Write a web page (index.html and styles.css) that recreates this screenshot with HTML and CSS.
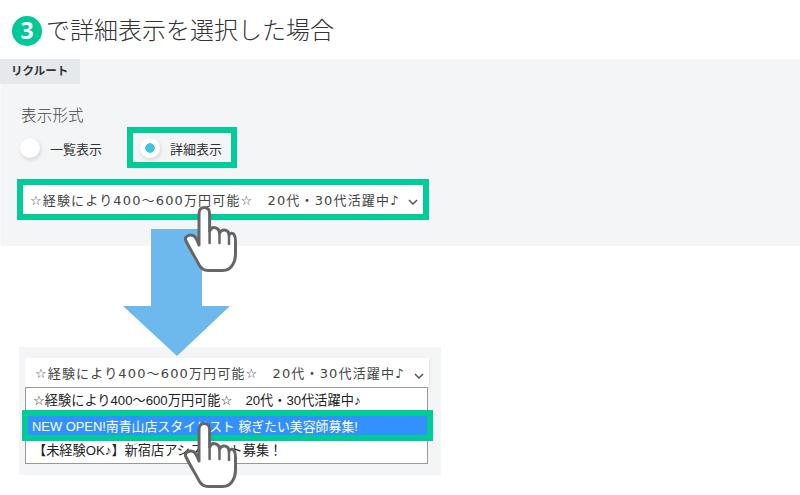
FILE: index.html
```html
<!DOCTYPE html>
<html lang="ja">
<head>
<meta charset="utf-8">
<title>詳細表示</title>
<link rel="stylesheet" href="styles.css">
</head>
<body>
<svg class="defs" width="0" height="0" aria-hidden="true">
  <symbol id="hand" viewBox="0 0 54 68">
    <path d="M15 39V7.500C15 3.800 17.200 1.500 20.300 1.500S25.600 3.800 25.600 7.500V25C27 22 29.500 21 31.700 21.800S35.500 24.500 35.500 27C37 24.500 39.500 23.500 41.500 24.200S45 26.800 45 29C46.500 27 48.500 26.800 49.800 28.300C51 29.800 51.500 32 51.500 35V48C51.500 52.500 50.500 56 48.500 59C46.500 62.500 43 64.500 38.500 64.500H24C20 64.500 17.500 62.800 15.500 59.500C11 51 6.500 44 2 35C1 33 1.500 31 3.500 30C6.500 28.500 9.500 29 11.500 31.500C13 33.500 14 36 15 39Z" fill="#fff" stroke="#666" stroke-width="3" stroke-linejoin="round"/>
    <path d="M25.600 25V37M35.500 27V37M45 29V38" fill="none" stroke="#666" stroke-width="2.500" stroke-linecap="round"/>
  </symbol>
</svg>

<h1 class="title"><span class="num">3</span>で詳細表示を選択した場合</h1>

<svg class="arrow" width="108" height="127" viewBox="0 0 108 127"><path d="M28 0h51v77h28L54 127 0 77h28z" fill="#6db9ee"/></svg>

<section class="panel">
  <div class="tab">リクルート</div>
  <div class="label">表示形式</div>
  <div class="radios">
    <div class="radio"><span class="dot"></span><span>一覧表示</span></div>
    <div class="radio selected"><span class="dot"></span><span>詳細表示</span></div>
  </div>
  <div class="select-frame">
    <span class="select-text">☆経験により400～600万円可能☆　20代・30代活躍中♪</span>
    <svg class="chev" width="10" height="6" viewBox="0 0 10 6"><path d="M1 1l4 4 4-4" fill="none" stroke="#555" stroke-width="1.500"/></svg>
  </div>
  <svg class="hand hand-top" width="54" height="68"><use href="#hand"/></svg>
</section>

<section class="panel-small">
  <div class="select-open">
    <span class="select-text">☆経験により400～600万円可能☆　20代・30代活躍中♪</span>
    <svg class="chev" width="10" height="6" viewBox="0 0 10 6"><path d="M1 1l4 4 4-4" fill="none" stroke="#555" stroke-width="1.500"/></svg>
  </div>
  <ul class="options">
    <li>☆経験により400～600万円可能☆　20代・30代活躍中♪</li>
    <li class="active">NEW OPEN!南青山店スタイリスト 稼ぎたい美容師募集!</li>
    <li class="last">【未経験OK♪】新宿店アシスタント募集！</li>
  </ul>
  <svg class="hand hand-bottom" width="54" height="68"><use href="#hand"/></svg>
</section>
</body>
</html>
```
FILE: styles.css
```css
* { box-sizing: border-box; }
html, body { margin: 0; padding: 0; }
body {
  position: relative;
  width: 800px;
  height: 495px;
  overflow: hidden;
  background: #fff;
  color: #333;
  font-family: "Noto Sans CJK JP", "Noto Sans", sans-serif;
}
.defs { position: absolute; }
.title {
  display: flex;
  align-items: center;
  height: 59px;
  margin: 0;
  padding: 0 0 2px 12px;
  font-size: 24px;
  font-weight: 300;
  line-height: 1;
  color: #333;
}
.num {
  display: flex;
  align-items: center;
  justify-content: center;
  width: 30px;
  height: 30px;
  margin-right: 4px;
  margin-top: 4px;
  border-radius: 50%;
  background: #00c896;
  color: #fff;
  font-family: "Open Sans", sans-serif;
  font-size: 23px;
  font-weight: 700;
}
.panel {
  position: relative;
  height: 187px;
  background: #f4f5f7;
  box-shadow: inset 1px 0 #fafafb;
}
.tab {
  width: 80px;
  height: 25px;
  padding-left: 11px;
  background: #e6e9ec;
  font-size: 11.500px;
  font-weight: 700;
  line-height: 23px;
}
.label {
  margin: 19px 0 0 21px;
  font-size: 15.500px;
  font-weight: 300;
  line-height: 22px;
  letter-spacing: .2px;
  color: #444;
}
.radios {
  display: flex;
  align-items: center;
  height: 41px;
  margin-top: 2px;
  padding-left: 20px;
}
.radio {
  display: flex;
  align-items: center;
  gap: 10px;
  font-size: 13px;
  color: #333;
}
.radio span:last-child { padding-top: 2px; }
.radio.selected {
  height: 41px;
  margin-left: 25px;
  padding-left: 7px;
  width: 110px;
  border: 6px solid #00cc99;
  gap: 10px;
}
.dot {
  display: block;
  width: 20px;
  height: 20px;
  border-radius: 50%;
  background: #fff;
  box-shadow: 1px 2px 4px rgba(0,0,0,.14);
}
.selected .dot {
  background: radial-gradient(circle, #3ec3e3 0 4.500px, #fff 5px);
}
.select-frame {
  display: flex;
  align-items: center;
  justify-content: space-between;
  width: 412px;
  height: 41px;
  margin: 11px 0 0 17px;
  padding: 0 5px 0 7px;
  border: 6px solid #00cc99;
  background: #fff;
}
.select-text {
  font-family: "DejaVu Sans", "Noto Sans CJK JP", sans-serif;
  font-size: 13px;
  font-weight: 400;
  letter-spacing: 1.150px;
  white-space: nowrap;
  color: #444;
}
.chev { flex: none; margin-top: 5px; }
.hand { position: absolute; z-index: 2; }
.hand-top { left: 184px; top: 147px; }
.arrow { position: absolute; z-index: 1; left: 123px; top: 229px; }
.panel-small {
  position: absolute;
  left: 19px;
  top: 347px;
  width: 422px;
  height: 128px;
  padding: 11px 0 0 6px;
  background: #f4f5f7;
}
.select-open {
  display: flex;
  align-items: center;
  justify-content: space-between;
  width: 404px;
  height: 29px;
  padding: 0 5px 0 10px;
  background: #fff;
  box-shadow: 1px 1px 2px rgba(0,0,0,.08);
}
.select-open .chev { margin-top: 7px; }
.options {
  width: 403px;
  height: 77px;
  margin: 0;
  padding: 0;
  list-style: none;
  background: #fff;
  border: 1px solid #999;
  font-family: "Liberation Sans", "DejaVu Sans", "Noto Sans CJK JP", sans-serif;
  font-size: 13.200px;
  color: #222;
}
.options li {
  display: flex;
  align-items: center;
  height: 22px;
  padding-left: 7px;
  white-space: nowrap;
}
.options li.active {
  height: 31px;
  margin: 0 -6px 0 -4px;
  padding-left: 4px;
  border: 6px solid #00cc99;
  background: #3390ff;
  color: #fff;
  font-size: 12.900px;
}
.options li.last { padding-bottom: 5px; }
.hand-bottom { left: 165px; top: 75px; }
```
